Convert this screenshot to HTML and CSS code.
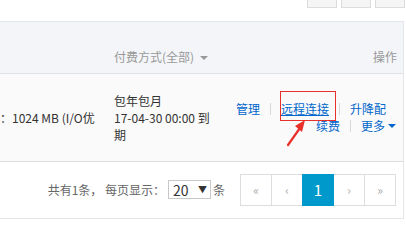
FILE: index.html
```html
<!DOCTYPE html>
<html lang="zh-CN">
<head>
  <meta charset="UTF-8">
  <title>实例列表</title>
  <link rel="stylesheet" href="styles.css">
</head>
<body>
  <div class="page">
    <div class="toolbar">
      <button class="tool-btn"></button>
      <button class="tool-btn"></button>
      <button class="tool-btn"></button>
    </div>

    <div class="panel">
      <table class="list">
        <colgroup>
          <col class="col-spec">
          <col class="col-pay">
          <col class="col-ops">
        </colgroup>
        <thead>
          <tr>
            <th></th>
            <th>付费方式(全部) <span class="caret"></span></th>
            <th class="ops-head">操作</th>
          </tr>
        </thead>
        <tbody>
          <tr>
            <td><div class="spec">：1024 MB (I/O优</div></td>
            <td class="pay">包年包月<br>17-04-30 00:00 到期</td>
            <td>
              <div class="ops">
                <div class="ops-line first">
                  <a href="#">管理</a><span class="sep"></span>
                  <a href="#" class="remote">远程连接</a><span class="sep"></span>
                  <a href="#">升降配</a>
                </div>
                <div class="ops-line">
                  <a href="#">续费</a><span class="sep"></span>
                  <a href="#">更多</a><span class="caret blue"></span>
                </div>
              </div>
            </td>
          </tr>
        </tbody>
      </table>

      <div class="pager">
        <span class="total">共有1条， 每页显示：</span>
        <div class="size-select"><span>20</span><span class="arrow">▼</span></div>
        <span class="total">条</span>
        <ul class="pages">
          <li>«</li>
          <li>‹</li>
          <li class="active">1</li>
          <li>›</li>
          <li>»</li>
        </ul>
      </div>
    </div>

    <!-- annotation drawn over the screenshot -->
    <div class="mark-box"></div>
    <svg class="mark-arrow" width="30" height="30" viewBox="0 0 30 30">
      <path d="M4 26 L16 9" stroke="#e8312a" stroke-width="2.2" fill="none" stroke-linecap="round"/>
      <path d="M21 1 L11 7 L18 13 Z" fill="#e8312a"/>
    </svg>
  </div>
</body>
</html>
```

FILE: styles.css
```css
* {
  box-sizing: border-box;
  margin: 0;
  padding: 0;
}

body {
  font-family: "Noto Sans CJK SC", "Noto Sans", sans-serif;
  font-size: 12px;
  color: #333;
  background-color: #ffffff;
  overflow: hidden;
}

.page {
  position: relative;
  display: flow-root;
  width: 406px;
  height: 250px;
}

/* Toolbar (cut off at top) */
.toolbar {
  display: flex;
  justify-content: flex-end;
  gap: 4px;
  margin-top: -22px;
  padding-right: 1px;
  height: 30px;
}

.tool-btn {
  width: 30px;
  height: 30px;
  background-color: #f5f5f5;
  border: 1px solid #dcdcdc;
}

/* Panel */
.panel {
  margin-top: 13px;
  width: 404px;
  border-top: 1px solid #e3e6ea;
  border-right: 1px solid #e3e6ea;
  border-bottom: 1px solid #e3e6ea;
}

.list {
  width: 100%;
  border-collapse: collapse;
  table-layout: fixed;
}

.col-spec { width: 114px; }
.col-pay { width: 104px; }

.list th {
  height: 51px;
  background-color: #f3f5f8;
  color: #999;
  font-weight: normal;
  text-align: left;
  vertical-align: bottom;
  padding-bottom: 8px;
  border-bottom: 1px solid #e0e4e8;
  line-height: 17px;
  white-space: nowrap;
}

.list th.ops-head {
  text-align: right;
  padding-right: 6px;
}

.caret {
  display: inline-block;
  width: 0;
  height: 0;
  margin-left: 3px;
  border-left: 4px solid transparent;
  border-right: 4px solid transparent;
  border-top: 4px solid #999;
  vertical-align: middle;
}

.caret.blue {
  border-top-color: #0066cc;
  margin-left: 3px;
}

.list td {
  height: 88px;
  background-color: #fafafa;
  border-bottom: 1px solid #dcdcdc;
  vertical-align: middle;
  line-height: 17px;
}

.list td.pay {
  padding-right: 6px;
}

.spec {
  white-space: nowrap;
  overflow: hidden;
}

/* Actions */
.ops {
  display: flex;
  flex-direction: column;
  align-items: flex-end;
  padding-right: 7px;
}

.ops-line {
  display: flex;
  align-items: center;
  height: 17px;
}

.ops-line.first {
  margin-right: 10px;
}

.ops a {
  color: #0066cc;
  text-decoration: none;
}

.ops a.remote {
  text-decoration: underline;
}

.sep {
  display: inline-block;
  width: 1px;
  height: 12px;
  margin: 0 10px;
  background-color: #d8d8d8;
}

/* Pager */
.pager {
  display: flex;
  justify-content: flex-end;
  align-items: center;
  height: 56px;
  padding-right: 7px;
  color: #666;
}

.size-select {
  display: flex;
  justify-content: space-between;
  align-items: center;
  width: 43px;
  height: 19px;
  margin: 0 2px 0 3px;
  padding: 0 3px 0 4px;
  border: 1px solid #c8c8c8;
  color: #333;
  font-size: 14px;
}

.size-select .arrow {
  font-size: 9px;
}

.pages {
  display: flex;
  list-style: none;
  margin-left: 16px;
}

.pages li {
  width: 32px;
  height: 32px;
  margin-left: -1px;
  display: flex;
  justify-content: center;
  align-items: center;
  border: 1px solid #dddddd;
  color: #aaa;
  font-size: 12px;
  background-color: #ffffff;
}

.pages li.active {
  background-color: #0099cc;
  border-color: #0099cc;
  color: #ffffff;
  font-size: 15px;
  position: relative;
}

/* Annotation */
.mark-box {
  position: absolute;
  left: 280px;
  top: 91px;
  width: 56px;
  height: 30px;
  border: 1px solid #e8312a;
}

.mark-arrow {
  position: absolute;
  left: 284px;
  top: 119px;
}
```
